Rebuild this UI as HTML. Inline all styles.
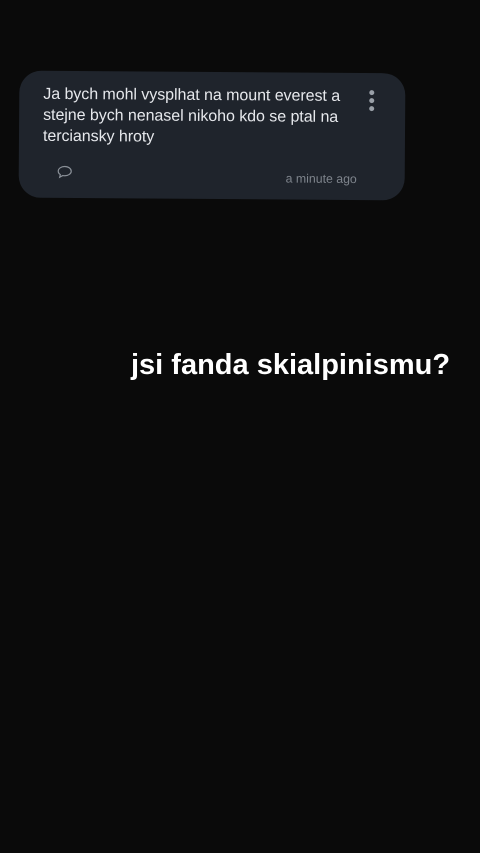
<!DOCTYPE html>
<html><head><style>
body{margin:0;width:480px;height:853px;background:#0a0a0a;overflow:hidden;font-family:"Liberation Sans",sans-serif;position:relative}
.card{position:absolute;left:19px;top:72px;width:386px;height:127px;background:#1f242c;border-radius:22px;transform:rotate(0.4deg);}
.txt{position:absolute;left:24px;top:13px;width:320px;color:#e6e8ec;font-size:16px;line-height:21px;letter-spacing:-0.05px}
.dots{position:absolute;left:350px;top:17px;}
.dots i{display:block;width:5px;height:5px;border-radius:50%;background:#9aa0a8;margin-bottom:3px}
.time{position:absolute;left:267px;top:99px;color:#7e848c;font-size:12.3px}
.title{position:absolute;left:131px;top:349px;color:#fff;font-weight:bold;font-size:29px;letter-spacing:0px;white-space:nowrap}
</style></head><body>
<div class="card">
<div class="txt">Ja bych mohl vysplhat na mount everest a stejne bych nenasel nikoho kdo se ptal na terciansky hroty</div>
<div class="dots"><i></i><i></i><i></i></div>
<svg style="position:absolute;left:38px;top:94px" width="16" height="14" viewBox="0 0 16 14"><path d="M8 1.5C4.4 1.5 1.5 3.6 1.5 6.2c0 1.4.8 2.6 2.1 3.5L3 12.3l3-1.7c.6.1 1.3.2 2 .2 3.6 0 6.5-2.1 6.5-4.6S11.6 1.5 8 1.5z" fill="none" stroke="#8a9098" stroke-width="1.2"/></svg>
<div class="time">a minute ago</div>
</div>
<div class="title">jsi fanda skialpinismu?</div>
</body></html>
